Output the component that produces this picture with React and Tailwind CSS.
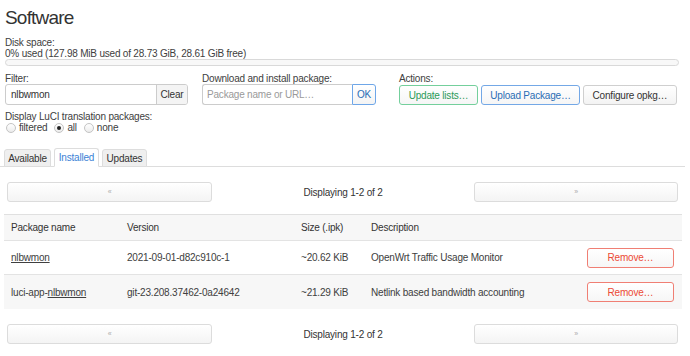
import React from "react";

function Radio({ checked, label }) {
  return (
    <span className="inline-flex items-center mr-[7px]">
      <span className="w-[10px] h-[10px] rounded-full border border-[#c4c4c4] bg-gradient-to-b from-white to-[#ececec] flex items-center justify-center mr-[3px]">
        {checked && <span className="w-[4px] h-[4px] rounded-full bg-[#222]" />}
      </span>
      <span>{label}</span>
    </span>
  );
}

function Pager() {
  return (
    <div className="flex items-center h-[20px] pl-[2px] w-[673px]">
      <div className="w-[205px] h-[20px] rounded-[3px] border border-[#dcdcdc] bg-gradient-to-b from-white to-[#f4f4f4] flex items-center justify-center text-[7px] text-[#aaa]">«</div>
      <div className="flex-1 text-center text-[#333]">Displaying 1-2 of 2</div>
      <div className="w-[204px] h-[20px] rounded-[3px] border border-[#dcdcdc] bg-gradient-to-b from-white to-[#f4f4f4] flex items-center justify-center text-[7px] text-[#aaa]">»</div>
    </div>
  );
}

function RemoveBtn() {
  return (
    <div className="w-[87px] h-[20px] rounded-[3px] border border-[#f07f74] bg-gradient-to-b from-white to-[#f6f6f6] text-[#ec4a36] flex items-center justify-center">Remove…</div>
  );
}

export default function App() {
  return (
    <div className="w-[690px] h-[356px] bg-white overflow-hidden font-['Liberation_Sans',Arial,sans-serif] text-[#404040] text-[10px] tracking-[-0.2px]">
      <div className="pl-[5px] pt-[6px]">
        <h2 className="text-[19px] leading-[24px] h-[24px] tracking-[-0.8px] text-[#333]">Software</h2>
        <div className="mt-[7px] leading-[11px]">Disk space:</div>
        <div className="leading-[11px]">0% used (127.98 MiB used of 28.73 GiB, 28.61 GiB free)</div>
        <div className="h-[7px] w-[674px] rounded-full border border-[#d9d9d9] bg-[#f8f8f8]" />

        <div className="flex mt-[7px]">
          <div className="w-[183px]">
            <div className="leading-[11px]">Filter:</div>
            <div className="flex h-[21px] border border-[#ccc] rounded-[3px] overflow-hidden">
              <div className="flex-1 px-[5px] flex items-center text-[#333]">nlbwmon</div>
              <div className="w-[31px] border-l border-[#ccc] bg-[#f4f4f4] flex items-center justify-center text-[#333]">Clear</div>
            </div>
          </div>
          <div className="w-[174px] ml-[14px]">
            <div className="leading-[11px]">Download and install package:</div>
            <div className="flex h-[21px]">
              <div className="flex-1 px-[4px] flex items-center text-[#9a9a9a] border border-[#ccc] border-r-0 rounded-l-[3px]">Package name or URL…</div>
              <div className="w-[24px] border border-[#6ea6e8] rounded-r-[3px] bg-gradient-to-b from-white to-[#f4f4f4] flex items-center justify-center text-[#2a6db5]">OK</div>
            </div>
          </div>
          <div className="ml-[23px]">
            <div className="leading-[11px]">Actions:</div>
            <div className="flex gap-[3px] mt-[1px]">
              <div className="w-[79px] h-[20px] rounded-[3px] border border-[#74cf9c] bg-gradient-to-b from-white to-[#f6f6f6] text-[#2b9a58] flex items-center justify-center">Update lists…</div>
              <div className="w-[99px] h-[20px] rounded-[3px] border border-[#74a8e6] bg-gradient-to-b from-white to-[#f6f6f6] text-[#2a6db5] flex items-center justify-center">Upload Package…</div>
              <div className="w-[94px] h-[20px] rounded-[3px] border border-[#cfcfcf] bg-gradient-to-b from-white to-[#f3f3f3] text-[#333] flex items-center justify-center">Configure opkg…</div>
            </div>
          </div>
        </div>

        <div className="mt-[6px] leading-[11px]">Display LuCI translation packages:</div>
        <div className="h-[11px] flex items-center pl-[1px]">
          <Radio label="filtered" />
          <Radio checked label="all" />
          <Radio label="none" />
        </div>

        <div className="mt-[15px] -ml-[5px] w-[685px] pl-[4px] flex items-end h-[19px] border-b border-[#ddd] gap-[3px]">
          <div className="w-[47px] h-[18px] -mb-px border border-[#ddd] rounded-t-[3px] bg-[#efefef] flex items-center justify-center text-[#333]">Available</div>
          <div className="w-[45px] h-[19px] -mb-px border border-[#ddd] border-b-white rounded-t-[3px] bg-white flex items-center justify-center text-[#3b82d6]">Installed</div>
          <div className="w-[45px] h-[18px] -mb-px border border-[#ddd] rounded-t-[3px] bg-[#efefef] flex items-center justify-center text-[#333]">Updates</div>
        </div>

        <div className="mt-[15px]">
          <Pager />
        </div>

        <div className="mt-[12px] -ml-[1px] w-[678px] border-t border-[#e0e0e0]">
          <div className="grid grid-cols-[116px_174px_70px_1fr_95px] items-center h-[26px] bg-[#f7f7f7] border-b border-[#e3e3e3] text-[#333]">
            <div className="pl-[7px]">Package name</div>
            <div className="pl-[7px]">Version</div>
            <div className="pl-[7px]">Size (.ipk)</div>
            <div className="pl-[7px]">Description</div>
            <div />
          </div>
          <div className="grid grid-cols-[116px_174px_70px_1fr_95px] items-center h-[34px] bg-white border-b border-[#e3e3e3]">
            <div className="pl-[7px]"><span className="underline">nlbwmon</span></div>
            <div className="pl-[7px]">2021-09-01-d82c910c-1</div>
            <div className="pl-[7px]">~20.62 KiB</div>
            <div className="pl-[7px]">OpenWrt Traffic Usage Monitor</div>
            <div><RemoveBtn /></div>
          </div>
          <div className="grid grid-cols-[116px_174px_70px_1fr_95px] items-center h-[34px] bg-[#f7f7f7]">
            <div className="pl-[7px]">luci-app-<span className="underline">nlbwmon</span></div>
            <div className="pl-[7px]">git-23.208.37462-0a24642</div>
            <div className="pl-[7px]">~21.29 KiB</div>
            <div className="pl-[7px]">Netlink based bandwidth accounting</div>
            <div><RemoveBtn /></div>
          </div>
        </div>

        <div className="mt-[15px]">
          <Pager />
        </div>
      </div>
    </div>
  );
}
